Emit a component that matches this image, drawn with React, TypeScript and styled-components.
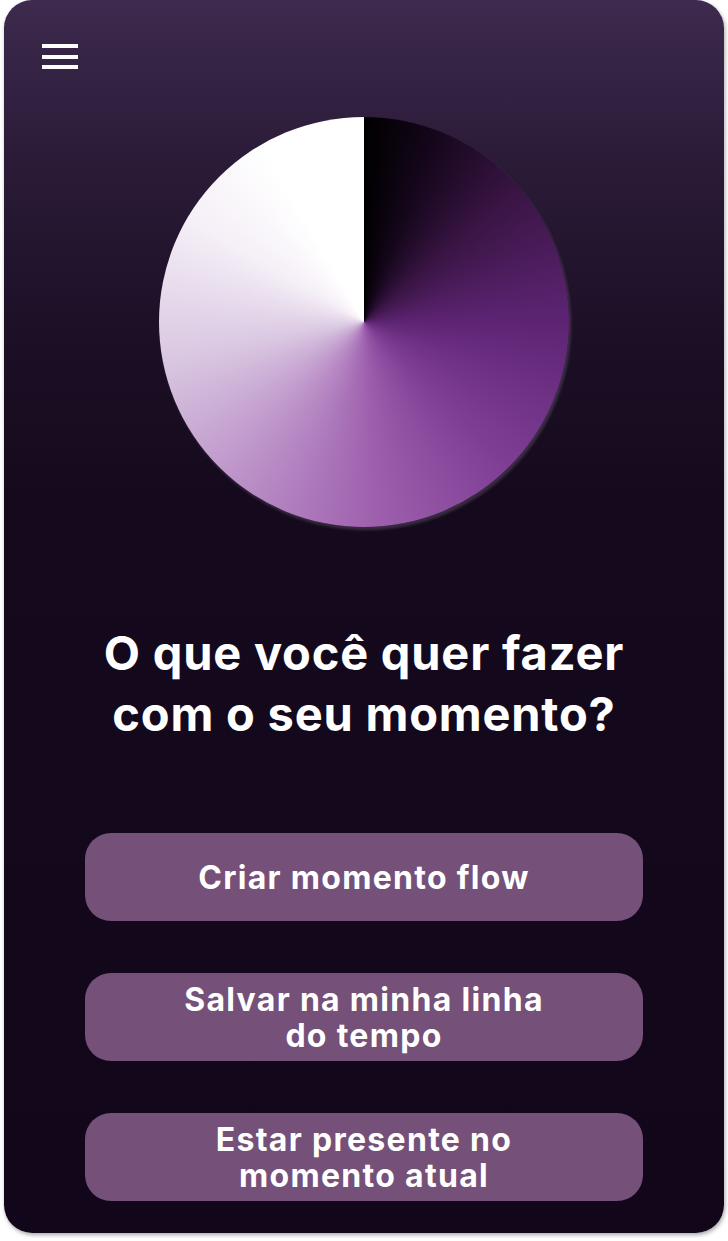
import React from "react";
import styled, { createGlobalStyle } from "styled-components";

const GlobalStyle = createGlobalStyle`
  html, body {
    margin: 0;
    padding: 0;
    background: #ffffff;
  }
  body {
    font-family: "Inter", "Noto Sans", sans-serif;
  }
  * { box-sizing: border-box; }
`;

const Page = styled.div`
  width: 728px;
  height: 1241px;
  padding: 0 4px 8px 4px;
  background: #ffffff;
`;

const Card = styled.main`
  width: 720px;
  height: 1233px;
  border-radius: 28px;
  overflow: hidden;
  display: flex;
  flex-direction: column;
  align-items: center;
  padding-top: 44px;
  background: linear-gradient(
    180deg,
    #3d2a4e 0%,
    #2c1c39 12%,
    #1d1027 26%,
    #150a1d 40%,
    #12071a 100%
  );
  box-shadow: 1px 2px 4px rgba(0, 0, 0, 0.35);
`;

const TopBar = styled.header`
  align-self: stretch;
  display: flex;
  padding-left: 38px;
`;

const MenuButton = styled.button`
  width: 36px;
  height: 25px;
  padding: 0;
  border: none;
  background: transparent;
  display: flex;
  flex-direction: column;
  justify-content: space-between;
  cursor: pointer;
`;

const MenuBar = styled.span`
  display: block;
  width: 36px;
  height: 4px;
  background: #ffffff;
`;

const Dial = styled.div`
  margin-top: 48px;
  width: 410px;
  height: 410px;
  border-radius: 50%;
  background: conic-gradient(
    from 0deg,
    #000000 0deg,
    #14061a 20deg,
    #3a1545 50deg,
    #5e2474 90deg,
    #7e3e94 135deg,
    #9d5ead 175deg,
    #b98dc6 215deg,
    #dac8e2 260deg,
    #f5eff7 300deg,
    #ffffff 330deg,
    #ffffff 360deg
  );
  box-shadow: 2px 3px 3px rgba(170, 150, 180, 0.25);
`;

const Title = styled.h1`
  margin: 95px 0 0 0;
  color: #ffffff;
  font-family: "Inter", "Noto Sans", sans-serif;
  font-weight: 700;
  font-size: 47px;
  line-height: 61px;
  text-align: center;
  letter-spacing: 0.8px;
`;

const Actions = styled.nav`
  margin-top: 89px;
  display: flex;
  flex-direction: column;
  gap: 52px;
`;

const ActionButton = styled.button`
  width: 558px;
  height: 88px;
  border: none;
  border-radius: 26px;
  background: #755079;
  color: #ffffff;
  font-family: "Inter", "Noto Sans", sans-serif;
  font-weight: 700;
  font-size: 32px;
  line-height: 36px;
  letter-spacing: 1.3px;
  text-align: center;
  padding: 2px 20px 0 20px;
  cursor: pointer;
`;

export default function App() {
  return (
    <>
      <GlobalStyle />
      <Page>
        <Card>
          <TopBar>
            <MenuButton aria-label="Menu">
              <MenuBar />
              <MenuBar />
              <MenuBar />
            </MenuButton>
          </TopBar>
          <Dial />
          <Title>
            O que você quer fazer
            <br />
            com o seu momento?
          </Title>
          <Actions>
            <ActionButton>Criar momento flow</ActionButton>
            <ActionButton>
              Salvar na minha linha
              <br />
              do tempo
            </ActionButton>
            <ActionButton>
              Estar presente no
              <br />
              momento atual
            </ActionButton>
          </Actions>
        </Card>
      </Page>
    </>
  );
}
